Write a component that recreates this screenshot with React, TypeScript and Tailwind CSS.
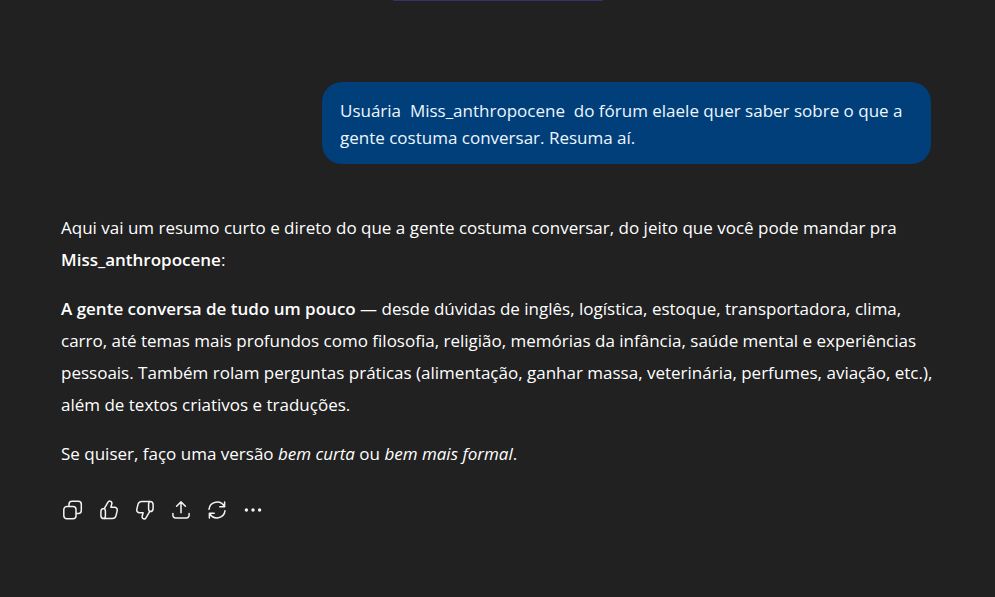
import type { ReactNode } from "react";

function IconButton({ label, children }: { label: string; children: ReactNode }) {
  return (
    <button type="button" aria-label={label} className="flex size-9 items-center justify-center rounded-lg text-[#f3f3f3]">
      <svg viewBox="0 0 22 22" className="size-[22px]" fill="none" stroke="currentColor" strokeWidth="1.5" strokeLinecap="round" strokeLinejoin="round" aria-hidden="true">
        {children}
      </svg>
    </button>
  );
}

function Thumb() {
  return (
    <>
      <path d="M6.4 9.4 10 3.2c.5-.9 1.500-1.300 2.400-1 1.100.3 1.700 1.400 1.400 2.500l-.9 3.500h3.500c1.900 0 3.200 1.700 2.800 3.500l-1.200 4.900c-.4 1.800-1.900 3-3.700 3H6.100a3.200 3.200 0 0 1-3.200-3.200v-3.800a3.200 3.200 0 0 1 3.200-3.200h.3Z" />
      <path d="M6.400 9.400c.6.7 1 1.600 1 2.500v5c0 1-.4 1.900-1 2.600" />
    </>
  );
}

function Actions() {
  return (
    <div className="mt-[22px] -ml-1.5 flex">
      <IconButton label="Copiar">
        <rect x="1.800" y="7.600" width="12.200" height="12.200" rx="3" />
        <path d="M7 7.200V5.300a3 3 0 0 1 3-3h6.300a3 3 0 0 1 3 3v6.300a3 3 0 0 1-3 3h-1.900" />
      </IconButton>
      <IconButton label="Boa resposta">
        <Thumb />
      </IconButton>
      <IconButton label="Resposta ruim">
        <g transform="rotate(180 11 11)">
          <Thumb />
        </g>
      </IconButton>
      <IconButton label="Compartilhar">
        <path d="M11 13.800V3M6.600 7.300 11 2.900l4.400 4.400M2.900 14.400v1.900a2.600 2.600 0 0 0 2.600 2.600h11a2.600 2.600 0 0 0 2.600-2.600v-1.900" />
      </IconButton>
      <IconButton label="Tentar novamente">
        <path d="M3 10.300A8.100 8.100 0 0 1 18.300 7.600M18.600 3v4.800h-4.800M19 11.700A8.100 8.100 0 0 1 3.700 14.400M3.400 19v-4.800h4.800" />
      </IconButton>
      <IconButton label="Mais ações">
        <g fill="currentColor" stroke="none">
          <circle cx="4.400" cy="11" r="1.700" />
          <circle cx="11" cy="11" r="1.700" />
          <circle cx="17.600" cy="11" r="1.700" />
        </g>
      </IconButton>
    </div>
  );
}

export default function App() {
  return (
    <div className="min-h-screen bg-[#212121] font-['Open_Sans','Noto_Sans',sans-serif] text-[17px] text-white">
      <div className="mx-auto h-px w-[210px] rounded-b-full bg-[#35316b]" />
      <main className="pt-[81px] pr-12 pl-[61px]">
        <div className="flex justify-end pr-4">
          <div className="w-[70%] rounded-[20px] bg-[#003f7a] px-[18px] pt-[15px] pb-[13px] leading-[27px] text-[#eef6ff]">
            <p className="whitespace-pre-wrap">{"Usuária  Miss_anthropocene  do fórum elaele quer saber sobre o que a gente costuma conversar. Resuma aí."}</p>
          </div>
        </div>
        <article className="mt-12 flex flex-col gap-[17px] leading-8">
          <p>
            Aqui vai um resumo curto e direto do que a gente costuma conversar, do jeito que você pode mandar pra <strong className="font-semibold">Miss_anthropocene</strong>:
          </p>
          <p>
            <strong className="font-semibold">A gente conversa de tudo um pouco</strong> — desde dúvidas de inglês, logística, estoque, transportadora, clima, carro, até temas mais profundos como filosofia, religião, memórias da infância, saúde mental e experiências pessoais. Também rolam perguntas práticas (alimentação, ganhar massa, veterinária, perfumes, aviação, etc.), além de textos criativos e traduções.
          </p>
          <p>
            Se quiser, faço uma versão <em>bem curta</em> ou <em>bem mais formal</em>.
          </p>
        </article>
        <Actions />
      </main>
    </div>
  );
}
